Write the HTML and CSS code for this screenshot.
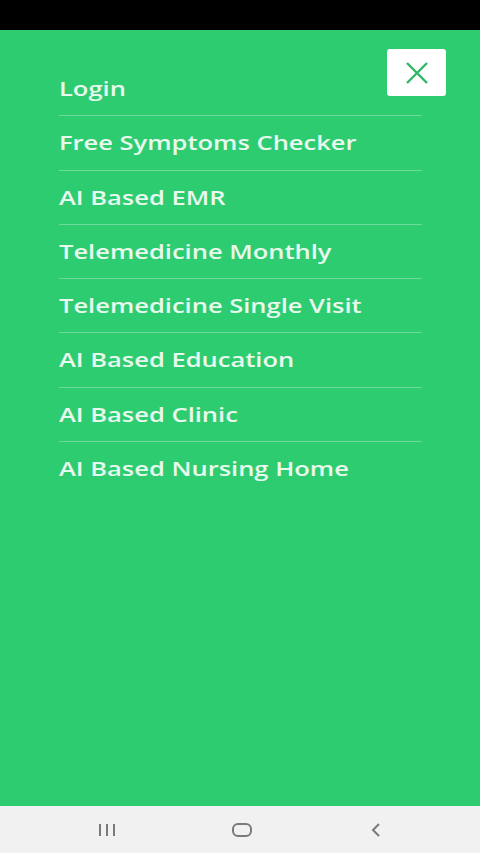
FILE: index.html
```html
<!DOCTYPE html>
<html lang="en">

<head>
    <meta charset="UTF-8">
    <meta name="viewport" content="width=device-width, initial-scale=1.0">
    <title>Menu</title>
    <link rel="stylesheet" href="styles.css">
</head>

<body>
    <div class="status-bar"></div>

    <div class="drawer">
        <button class="close-btn" aria-label="Close">
            <svg width="26" height="22" viewBox="0 0 26 22">
                <path d="M3 1 L23 21 M23 1 L3 21" stroke="#2fb765" stroke-width="2.4" fill="none" />
            </svg>
        </button>

        <ul class="menu">
            <li><a href="#">Login</a></li>
            <li><a href="#">Free Symptoms Checker</a></li>
            <li><a href="#">AI Based EMR</a></li>
            <li><a href="#">Telemedicine Monthly</a></li>
            <li><a href="#">Telemedicine Single Visit</a></li>
            <li><a href="#">AI Based Education</a></li>
            <li><a href="#">AI Based Clinic</a></li>
            <li><a href="#">AI Based Nursing Home</a></li>
        </ul>
    </div>

    <div class="nav-bar">
        <svg width="22" height="16" viewBox="0 0 22 16">
            <path d="M4 2 V14 M11 2 V14 M18 2 V14" stroke="#7a7a7a" stroke-width="2" />
        </svg>
        <svg width="22" height="16" viewBox="0 0 22 16">
            <rect x="2" y="2" width="18" height="12" rx="5" stroke="#7a7a7a" stroke-width="2" fill="none" />
        </svg>
        <svg width="22" height="16" viewBox="0 0 22 16">
            <path d="M14 2 L8 8 L14 14" stroke="#7a7a7a" stroke-width="2" fill="none" />
        </svg>
    </div>
</body>

</html>
```

FILE: styles.css
```css
html, body {
    height: 100%;
}
body {
    margin: 0;
    display: flex;
    flex-direction: column;
    font-family: "Open Sans", "Noto Sans", sans-serif;
    background-color: #2ecc71;
}
.status-bar {
    height: 30px;
    background-color: #000;
}
.drawer {
    position: relative;
    flex: 1;
    background-color: #2ecc71;
    padding: 32px 0 0 59px;
}
.close-btn {
    position: absolute;
    top: 19px;
    right: 34px;
    width: 59px;
    height: 47px;
    border: none;
    border-radius: 3px;
    background-color: #fff;
    display: flex;
    align-items: center;
    justify-content: center;
    padding: 0;
    cursor: pointer;
}
.menu {
    list-style: none;
    margin: 0;
    padding: 0;
    width: 363px;
}
.menu li {
    padding: 13px 0;
    font-size: 20px;
    line-height: 27.3px;
    border-bottom: 1px solid rgba(255, 255, 255, 0.3);
}
.menu li:last-child {
    border-bottom: none;
}
.menu a {
    display: inline-block;
    color: #e8f9ee;
    text-decoration: none;
    font-weight: 600;
    transform: scaleX(1.275);
    transform-origin: left center;
}
.nav-bar {
    height: 47px;
    background-color: #f1f1f1;
    display: flex;
    align-items: center;
    justify-content: space-between;
    padding: 0 93px 0 96px;
}
```
